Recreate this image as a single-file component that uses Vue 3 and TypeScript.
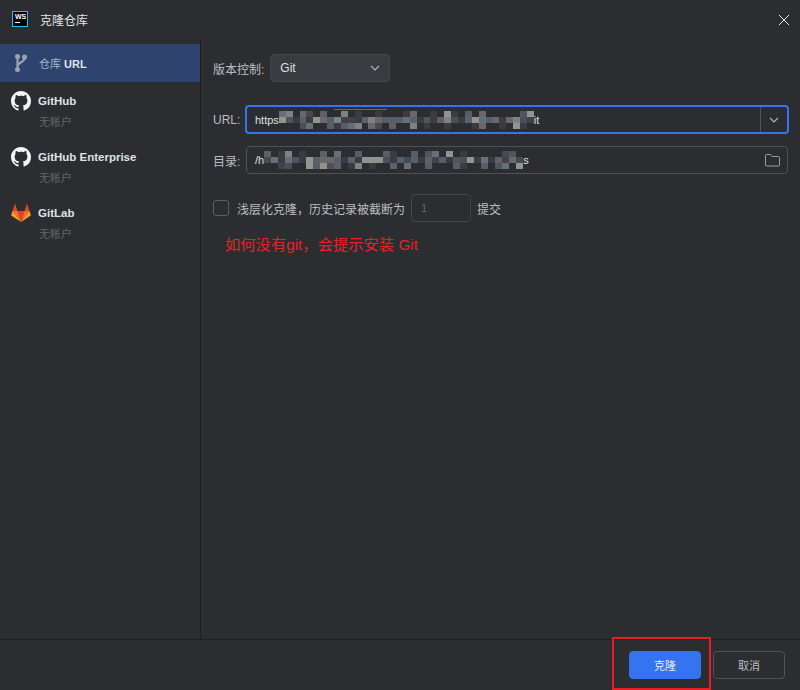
<template>
  <div class="dialog">
    <header class="title-bar">
      <span class="ws-logo"><b>WS</b><i></i></span>
      <span class="title-text">克隆仓库</span>
      <svg class="close" width="12" height="12" viewBox="0 0 12 12">
        <path d="M1 1l10 10M11 1L1 11" stroke="#e6e6e6" stroke-width="1" fill="none" />
      </svg>
    </header>

    <div class="body">
      <aside class="sidebar">
        <div class="side-url">
          <svg class="branch" width="12" height="18" viewBox="0 0 12 18" fill="none">
            <circle cx="2.500" cy="2.500" r="2.500" fill="#9aa3b2" />
            <circle cx="2.500" cy="15.500" r="2.500" fill="#9aa3b2" />
            <circle cx="9.500" cy="3" r="2.500" fill="#9aa3b2" />
            <path d="M2.500 3v12M9.500 4c0 4.500-7 4-7 8.500" stroke="#9aa3b2" stroke-width="2.200" />
          </svg>
          <span class="side-url-text">仓库 <b>URL</b></span>
        </div>

        <div v-for="acc in accounts" :key="acc.name" class="account">
          <div class="account-head">
            <svg v-if="acc.kind === 'github'" class="acc-icon" width="20" height="20" viewBox="0 0 16 16">
              <path
                fill="#f4f4f4"
                d="M8 0C3.580 0 0 3.580 0 8c0 3.540 2.290 6.530 5.470 7.590.4.070.55-.17.55-.38 0-.19-.01-.82-.01-1.490-2.010.37-2.530-.49-2.690-.94-.09-.23-.48-.94-.82-1.130-.28-.15-.68-.52-.01-.53.630-.01 1.080.58 1.230.82.720 1.210 1.870.87 2.330.66.070-.52.280-.87.510-1.070-1.780-.2-3.640-.89-3.640-3.950 0-.87.310-1.590.820-2.150-.08-.2-.36-1.020.08-2.120 0 0 .67-.21 2.200.82.640-.18 1.320-.27 2-.27s1.360.09 2 .27c1.530-1.040 2.200-.82 2.200-.82.440 1.100.16 1.920.08 2.120.51.560.82 1.270.82 2.150 0 3.070-1.870 3.750-3.650 3.950.29.250.54.730.54 1.480 0 1.070-.01 1.930-.01 2.200 0 .21.150.46.550.38A8.010 8.010 0 0 0 16 8c0-4.420-3.580-8-8-8z"
              />
            </svg>
            <svg v-else class="acc-icon" width="20" height="20" viewBox="0 0 20 20">
              <path fill="#e24329" d="M10 19L6.500 8h7z" />
              <path fill="#fc6d26" d="M10 19L6.500 8H1.500z" />
              <path fill="#fca326" d="M1.500 8L.3 11.700c-.1.400 0 .700.300 1L10 19z" />
              <path fill="#e24329" d="M1.500 8h5L4.300 1.300c-.1-.300-.6-.300-.7 0z" />
              <path fill="#fc6d26" d="M10 19l3.500-11h5z" />
              <path fill="#fca326" d="M18.500 8l1.200 3.700c.1.400 0 .700-.3 1L10 19z" />
              <path fill="#e24329" d="M18.500 8h-5l2.200-6.700c.1-.300.6-.300.7 0z" />
            </svg>
            <span class="acc-name">{{ acc.name }}</span>
          </div>
          <div class="acc-sub">无帐户</div>
        </div>
      </aside>

      <main class="content">
        <div class="vcs-row">
          <span class="label">版本控制:</span>
          <div class="select">
            <span>Git</span>
            <svg width="10" height="6" viewBox="0 0 10 6" fill="none">
              <path d="M1 1l4 4 4-4" stroke="#b4b8bf" stroke-width="1.100" />
            </svg>
          </div>
        </div>

        <div class="field-row url-row">
          <span class="label field-label">URL:</span>
          <div class="input input--focus">
            <span class="input-text">https</span>
            <div class="mosaic mosaic--url">
              <span
                v-for="(c, i) in urlCells"
                :key="i"
                class="cell"
                :style="{ background: c }"
              ></span>
              <span class="mosaic-line"></span>
            </div>
            <span class="input-text">it</span>
            <span class="drop">
              <svg width="10" height="6" viewBox="0 0 10 6" fill="none">
                <path d="M1 1l4 4 4-4" stroke="#b4b8bf" stroke-width="1.100" />
              </svg>
            </span>
          </div>
        </div>

        <div class="field-row dir-row">
          <span class="label field-label">目录:</span>
          <div class="input">
            <span class="input-text">/h</span>
            <div class="mosaic mosaic--dir">
              <span
                v-for="(c, i) in dirCells"
                :key="i"
                class="cell"
                :style="{ background: c }"
              ></span>
            </div>
            <span class="input-text">s</span>
            <svg class="folder" width="15" height="13" viewBox="0 0 15 13" fill="none">
              <path
                d="M1.500.5h4l1.800 2h6.200a1 1 0 0 1 1 1v7.500a1 1 0 0 1-1 1h-12a1 1 0 0 1-1-1v-9.500a1 1 0 0 1 1-1z"
                stroke="#9a9da3"
              />
            </svg>
          </div>
        </div>

        <div class="shallow-row">
          <span class="checkbox"></span>
          <span class="label shallow-text">浅层化克隆，历史记录被截断为</span>
          <span class="depth">1</span>
          <span class="label">提交</span>
        </div>

        <p class="note">如何没有git，会提示安装 Git</p>
      </main>
    </div>

    <footer class="footer">
      <button class="btn btn--primary">克隆</button>
      <button class="btn">取消</button>
      <span class="annotation"></span>
    </footer>
  </div>
</template>

<script setup lang="ts">
interface Account {
  name: string;
  kind: 'github' | 'gitlab';
}

const accounts: Account[] = [
  { name: 'GitHub', kind: 'github' },
  { name: 'GitHub Enterprise', kind: 'github' },
  { name: 'GitLab', kind: 'gitlab' },
];

// the path and url are pixelated in the screenshot
const palette = ['#3a3c42', '#5c6068', '#7d8286', '#464a52', '#50545c', '#92958f', '#565e68', '#3d3b40', '#6c676b', '#45414c', '#4b5058', '#66707a'];

function cells(count: number, seed: number): string[] {
  const out: string[] = [];
  let s = seed;
  for (let i = 0; i < count; i++) {
    s = (s * 31 + 17) % 211;
    // top and bottom rows stay partly background, as the blur fades out there
    const row = Math.floor(i / 37);
    const fade = row !== 1 && s % 2 === 0;
    out.push(fade ? 'transparent' : palette[(s + i) % palette.length]);
  }
  return out;
}

const urlCells = cells(111, 7);
const dirCells = cells(111, 23);
</script>

<style>
html,
body {
  margin: 0;
  background: #2b2d30;
}
</style>

<style scoped>
.dialog {
  width: 800px;
  height: 690px;
  display: flex;
  flex-direction: column;
  background: #2b2d30;
  color: #dfe1e5;
  font-family: "Liberation Sans", "Noto Sans CJK SC", sans-serif;
  font-size: 12px;
  overflow: hidden;
}
.title-bar {
  height: 40px;
  flex: none;
  display: flex;
  align-items: center;
  padding-left: 12px;
}
.ws-logo {
  width: 16px;
  height: 16px;
  box-sizing: border-box;
  margin-top: -2px;
  border: 1px solid #12c4f0;
  background: #000;
  display: flex;
  flex-direction: column;
  padding: 1px 2px;
  color: #fff;
}
.ws-logo b {
  font-size: 7px;
  line-height: 7px;
  font-weight: 700;
}
.ws-logo i {
  display: block;
  width: 5px;
  height: 1px;
  margin-top: 2px;
  background: #fff;
}
.title-text {
  margin: -2px 0 0 12px;
  font-size: 12px;
  color: #e3e4e6;
}
.close {
  margin-left: auto;
  margin-right: 10px;
}
.body {
  flex: 1;
  display: flex;
  min-height: 0;
}
.sidebar {
  width: 200px;
  flex: none;
  border-right: 1px solid #1e1f22;
  padding-top: 4px;
}
.side-url {
  height: 38px;
  display: flex;
  align-items: center;
  padding-left: 15px;
  background: #2e436e;
}
.branch {
  flex: none;
}
.side-url-text {
  margin-left: 12px;
  color: #a8b3c8;
  font-size: 11px;
}
.side-url-text b {
  color: #dfe5f0;
}
.account {
  height: 56px;
  box-sizing: border-box;
  padding: 9px 0 0 11px;
}
.account-head {
  display: flex;
  align-items: center;
  height: 20px;
}
.acc-icon {
  flex: none;
}
.acc-name {
  margin-left: 7px;
  font-size: 11.500px;
  font-weight: 700;
  color: #dfe1e5;
}
.acc-sub {
  margin: 4px 0 0 28px;
  font-size: 11px;
  line-height: 15px;
  color: #63666b;
}
.content {
  flex: 1;
  min-width: 0;
  padding: 14px 12px 0 12px;
}
.label {
  font-size: 12px;
  color: #bcbec4;
  white-space: nowrap;
}
.vcs-row {
  display: flex;
  align-items: center;
  gap: 6px;
}
.select {
  width: 120px;
  height: 28px;
  box-sizing: border-box;
  border: 1px solid #43454a;
  border-radius: 4px;
  background: #393b40;
  display: flex;
  align-items: center;
  justify-content: space-between;
  padding: 0 9px;
  color: #dfe1e5;
}
.field-row {
  display: flex;
  align-items: center;
}
.url-row {
  margin-top: 23px;
}
.dir-row {
  margin-top: 12px;
}
.field-label {
  width: 33px;
  flex: none;
}
.input {
  flex: 1;
  height: 28px;
  box-sizing: border-box;
  border: 1px solid #4e5157;
  border-radius: 4px;
  display: flex;
  align-items: center;
  padding-left: 8px;
}
.input--focus {
  height: 29px;
  border: 2px solid #3574f0;
  margin: 0 -1px;
  padding-left: 8px;
}
.input-text {
  color: #dfe1e5;
  font-size: 11px;
}
.mosaic {
  display: grid;
  grid-template-columns: repeat(37, 7px);
  grid-auto-rows: 6px;
  height: 18px;
  position: relative;
}
.mosaic--url {
  grid-template-columns: repeat(37, 6.900px);
}
.mosaic-line {
  position: absolute;
  left: 55px;
  top: -2px;
  width: 53px;
  height: 1px;
  background: #3f6fc0;
}
.cell {
  display: block;
}
.drop {
  margin-left: auto;
  width: 27px;
  height: 100%;
  box-sizing: border-box;
  border-left: 1px solid #4e5157;
  display: flex;
  align-items: center;
  justify-content: center;
}
.folder {
  margin-left: auto;
  margin-right: 7px;
}
.shallow-row {
  display: flex;
  align-items: center;
  margin-top: 20px;
}
.checkbox {
  width: 16px;
  height: 16px;
  box-sizing: border-box;
  border: 1px solid #5a5d63;
  border-radius: 3px;
}
.shallow-text {
  margin-left: 8px;
}
.depth {
  width: 60px;
  height: 28px;
  margin: 0 6px;
  box-sizing: border-box;
  border: 1px solid #43454a;
  border-radius: 4px;
  padding-left: 9px;
  line-height: 26px;
  font-size: 11px;
  color: #63666b;
}
.note {
  margin: 13px 0 0 12px;
  font-size: 15.300px;
  line-height: 20px;
  color: #e8212b;
}
.footer {
  height: 51px;
  flex: none;
  box-sizing: border-box;
  border-top: 1px solid #1e1f22;
  display: flex;
  align-items: flex-start;
  justify-content: flex-end;
  gap: 12px;
  padding: 11px 15px 0 0;
  position: relative;
}
.btn {
  width: 72px;
  height: 28px;
  box-sizing: border-box;
  border: 1px solid #4e5157;
  border-radius: 4px;
  background: transparent;
  color: #bcbec4;
  font-family: inherit;
  font-size: 11px;
  padding: 0;
}
.btn--primary {
  background: #3574f0;
  border-color: #3574f0;
  color: #e6ecf8;
}
.annotation {
  position: absolute;
  left: 612px;
  top: -3px;
  width: 99px;
  height: 53px;
  box-sizing: border-box;
  border: 2px solid #ed1c24;
}
</style>
